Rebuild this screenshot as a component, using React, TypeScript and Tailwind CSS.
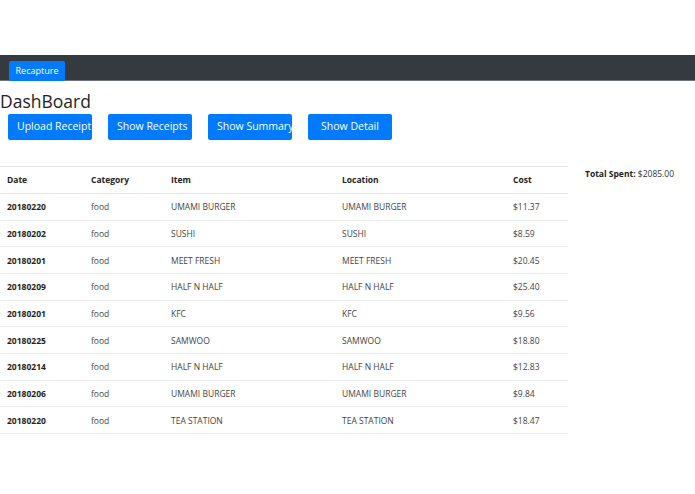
const rows = [
  ['20180220', 'food', 'UMAMI BURGER', 'UMAMI BURGER', '$11.37'],
  ['20180202', 'food', 'SUSHI', 'SUSHI', '$8.59'],
  ['20180201', 'food', 'MEET FRESH', 'MEET FRESH', '$20.45'],
  ['20180209', 'food', 'HALF N HALF', 'HALF N HALF', '$25.40'],
  ['20180201', 'food', 'KFC', 'KFC', '$9.56'],
  ['20180225', 'food', 'SAMWOO', 'SAMWOO', '$18.80'],
  ['20180214', 'food', 'HALF N HALF', 'HALF N HALF', '$12.83'],
  ['20180206', 'food', 'UMAMI BURGER', 'UMAMI BURGER', '$9.84'],
  ['20180220', 'food', 'TEA STATION', 'TEA STATION', '$18.47'],
];

const buttons = ['Upload Receipt', 'Show Receipts', 'Show Summary', 'Show Detail'];

export default function App() {
  return (
    <div className="h-[494px] w-[695px] bg-white text-[#212529] font-['Open_Sans','Noto_Sans',sans-serif] overflow-hidden">
      <div className="h-[55px]" />
      <nav className="h-[26px] bg-[#343a40] border-b border-[#6c757d] pl-[9px] pt-px">
        <button className="h-[20px] w-[56px] rounded-[2px] bg-[#007bff] text-white text-[9px]">Recapture</button>
      </nav>
      <h1 className="mt-[8px] text-[17.5px] leading-[24px] font-medium">DashBoard</h1>
      <div className="flex gap-[16px] pl-[8px] mt-[1px]">
        {buttons.map((b) => (
          <button
            key={b}
            className="h-[26px] w-[84px] px-[9px] rounded-[2px] bg-[#007bff] text-white text-[10.5px] text-center whitespace-nowrap overflow-hidden"
          >
            <span className="block">{b}</span>
          </button>
        ))}
      </div>
      <div className="flex mt-[26px]">
        <table className="w-[568px] text-[8.5px] border-collapse">
          <thead>
            <tr className="h-[27px] border-y border-[#e3e6e9] text-left font-bold text-[#222]">
              <th className="w-[84px] pl-[7px]">Date</th>
              <th className="w-[80px] pl-[7px]">Category</th>
              <th className="w-[171px] pl-[7px]">Item</th>
              <th className="w-[171px] pl-[7px]">Location</th>
              <th className="pl-[7px]">Cost</th>
            </tr>
          </thead>
          <tbody>
            {rows.map((r, i) => (
              <tr key={i} className="h-[26.67px] border-b border-[#e9ecef] text-[#444]">
                <td className="pl-[7px] pt-[2px] font-bold text-[#222]">{r[0]}</td>
                <td className="pl-[7px] pt-[2px]">{r[1]}</td>
                <td className="pl-[7px] pt-[2px]">{r[2]}</td>
                <td className="pl-[7px] pt-[2px]">{r[3]}</td>
                <td className="pl-[7px] pt-[2px]">{r[4]}</td>
              </tr>
            ))}
          </tbody>
        </table>
        <div className="pl-[17px] pt-[2px] text-[8.5px] text-[#333]">
          <span className="font-bold text-[#222]">Total Spent:</span> $2085.00
        </div>
      </div>
    </div>
  );
}
